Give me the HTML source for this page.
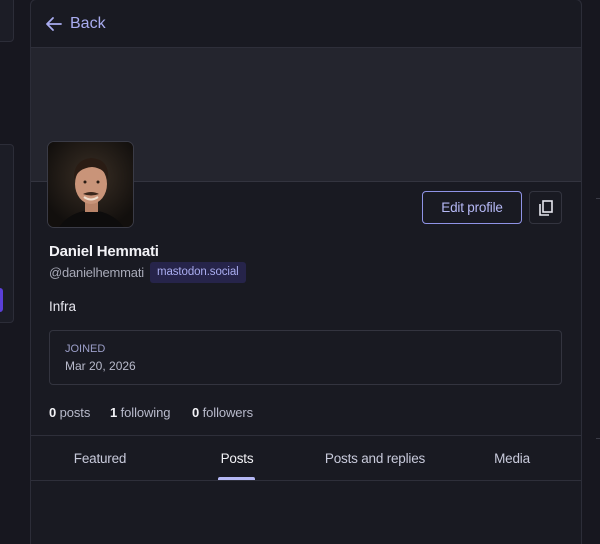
<!DOCTYPE html>
<html><head><meta charset="utf-8"><style>
*{box-sizing:border-box;margin:0;padding:0}
html,body{width:600px;height:544px;overflow:hidden}
body{background:#17171f;font-family:"Liberation Sans",sans-serif;position:relative;color:#e6e6ee}
.lb{position:absolute;left:-6px;border:1px solid #2c2d38;background:#1c1d26;border-radius:4px;width:20px}
.col{position:absolute;left:30px;top:-1px;width:552px;height:545px;background:#191a22;border-left:1px solid #2c2d38;border-right:1px solid #2c2d38;border-radius:6px 6px 0 0;border-top:1px solid #2c2d38}
.hdr{height:48px;border-bottom:1px solid #2e2f3a;display:flex;align-items:center;padding-left:14px;color:#a9acf0;font-size:16px}
.ban{height:134px;background:#24252e;border-bottom:1px solid #33343f}
.av{position:absolute;left:16px;top:141px;width:87px;height:87px;border-radius:7px;border:1px solid #3a3b46;overflow:hidden;background:#1a1613}
.btn{position:absolute;top:191px;height:33px;border-radius:4px;display:flex;align-items:center;justify-content:center}
.tab{position:absolute;top:451px;font-size:13.5px;color:#c8cadb;transform:translateX(-50%);letter-spacing:-0.2px}
.st{position:absolute;top:405px;font-size:13px;color:#b8bacb;letter-spacing:-0.1px}
.st b{color:#f2f2f6}
</style></head><body>
<div class="lb" style="top:-4px;height:46px"></div>
<div class="lb" style="top:144px;height:179px"></div>
<div style="position:absolute;left:0;top:288px;width:3px;height:24px;background:#5b3fd8;border-radius:0 3px 3px 0"></div>
<div style="position:absolute;left:596px;top:198px;width:4px;height:1px;background:#3a3b46"></div>
<div style="position:absolute;left:596px;top:438px;width:4px;height:1px;background:#3a3b46"></div>
<div class="col">
 <div class="hdr"><svg width="18" height="18" viewBox="0 0 18 18" fill="none" stroke="#a9acf0" stroke-width="1.8" stroke-linecap="round" stroke-linejoin="round"><path d="M16 9H2M8 3L2 9l6 6"/></svg><span style="margin-left:7px">Back</span></div>
 <div class="ban"></div>
 <div class="av"><svg width="87" height="87" viewBox="0 0 87 87">
  <defs><radialGradient id="g" cx="50%" cy="40%" r="60%"><stop offset="0" stop-color="#3a2f25"/><stop offset="1" stop-color="#120f0d"/></radialGradient></defs>
  <rect width="87" height="87" fill="url(#g)"/>
  <path d="M10 87 Q20 70 43 68 Q66 70 77 87Z" fill="#0d0c0c"/>
  <rect x="37" y="55" width="13" height="15" fill="#b98469"/>
  <ellipse cx="43" cy="42" rx="16" ry="20" fill="#c99479"/>
  <path d="M26 38 Q25 18 43 16 Q62 17 60 38 Q57 26 44 25 Q30 26 26 38Z" fill="#2a1c14"/>
  <path d="M35 52 Q43 48 51 52 Q43 55 35 52Z" fill="#3a261b"/>
  <path d="M36 55 Q43 60 50 55" stroke="#f0e0d0" stroke-width="2" fill="none"/>
  <circle cx="37" cy="40" r="1.5" fill="#2a1c14"/><circle cx="50" cy="40" r="1.5" fill="#2a1c14"/>
 </svg></div>
 <div class="btn" style="left:391px;width:100px;border:1px solid #8f93e6;color:#b5b8f5;font-size:13.5px;letter-spacing:-0.2px">Edit profile</div>
 <div class="btn" style="left:498px;width:33px;border:1px solid #33343f"><svg width="18" height="18" viewBox="0 0 18 18" fill="none" stroke="#e6e6ee" stroke-width="1.6"><rect x="6" y="2" width="9" height="11"/><path d="M3 5v11h9"/></svg></div>
 <div style="position:absolute;left:18px;top:243px;font-size:15px;font-weight:bold;color:#f2f2f6;letter-spacing:-0.2px">Daniel Hemmati</div>
 <div style="position:absolute;left:18px;top:265px;font-size:13px;color:#a8aab8;letter-spacing:-0.2px">@danielhemmati</div>
 <div style="position:absolute;left:119px;top:262px;height:21px;padding:0 7px;background:#26244a;border-radius:3px;font-size:11.5px;line-height:21px;color:#a9acf0;letter-spacing:-0.1px">mastodon.social</div>
 <div style="position:absolute;left:18px;top:299px;font-size:13.5px;color:#e6e6ee">Infra</div>
 <div style="position:absolute;left:18px;top:330px;width:513px;height:55px;border:1px solid #33343f;border-radius:4px">
  <div style="position:absolute;left:15px;top:12px;font-size:11px;color:#9b9ec8">JOINED</div>
  <div style="position:absolute;left:15px;top:28px;font-size:12px;color:#b8bacb">Mar 20, 2026</div>
 </div>
 <div class="st" style="left:18px"><b>0</b> posts</div>
 <div class="st" style="left:79px"><b>1</b> following</div>
 <div class="st" style="left:161px"><b>0</b> followers</div>
 <div style="position:absolute;left:0;top:435px;width:100%;height:1px;background:#2e2f3a"></div>
 <div class="tab" style="left:69px">Featured</div>
 <div class="tab" style="left:206px;color:#f2f2f6">Posts</div>
 <div class="tab" style="left:344px">Posts and replies</div>
 <div class="tab" style="left:481px">Media</div>
 <div style="position:absolute;left:187px;top:477px;width:37px;height:3px;background:#b5b8f5;border-radius:2px 2px 0 0"></div>
 <div style="position:absolute;left:0;top:480px;width:100%;height:1px;background:#2e2f3a"></div>
</div>
</body></html>
